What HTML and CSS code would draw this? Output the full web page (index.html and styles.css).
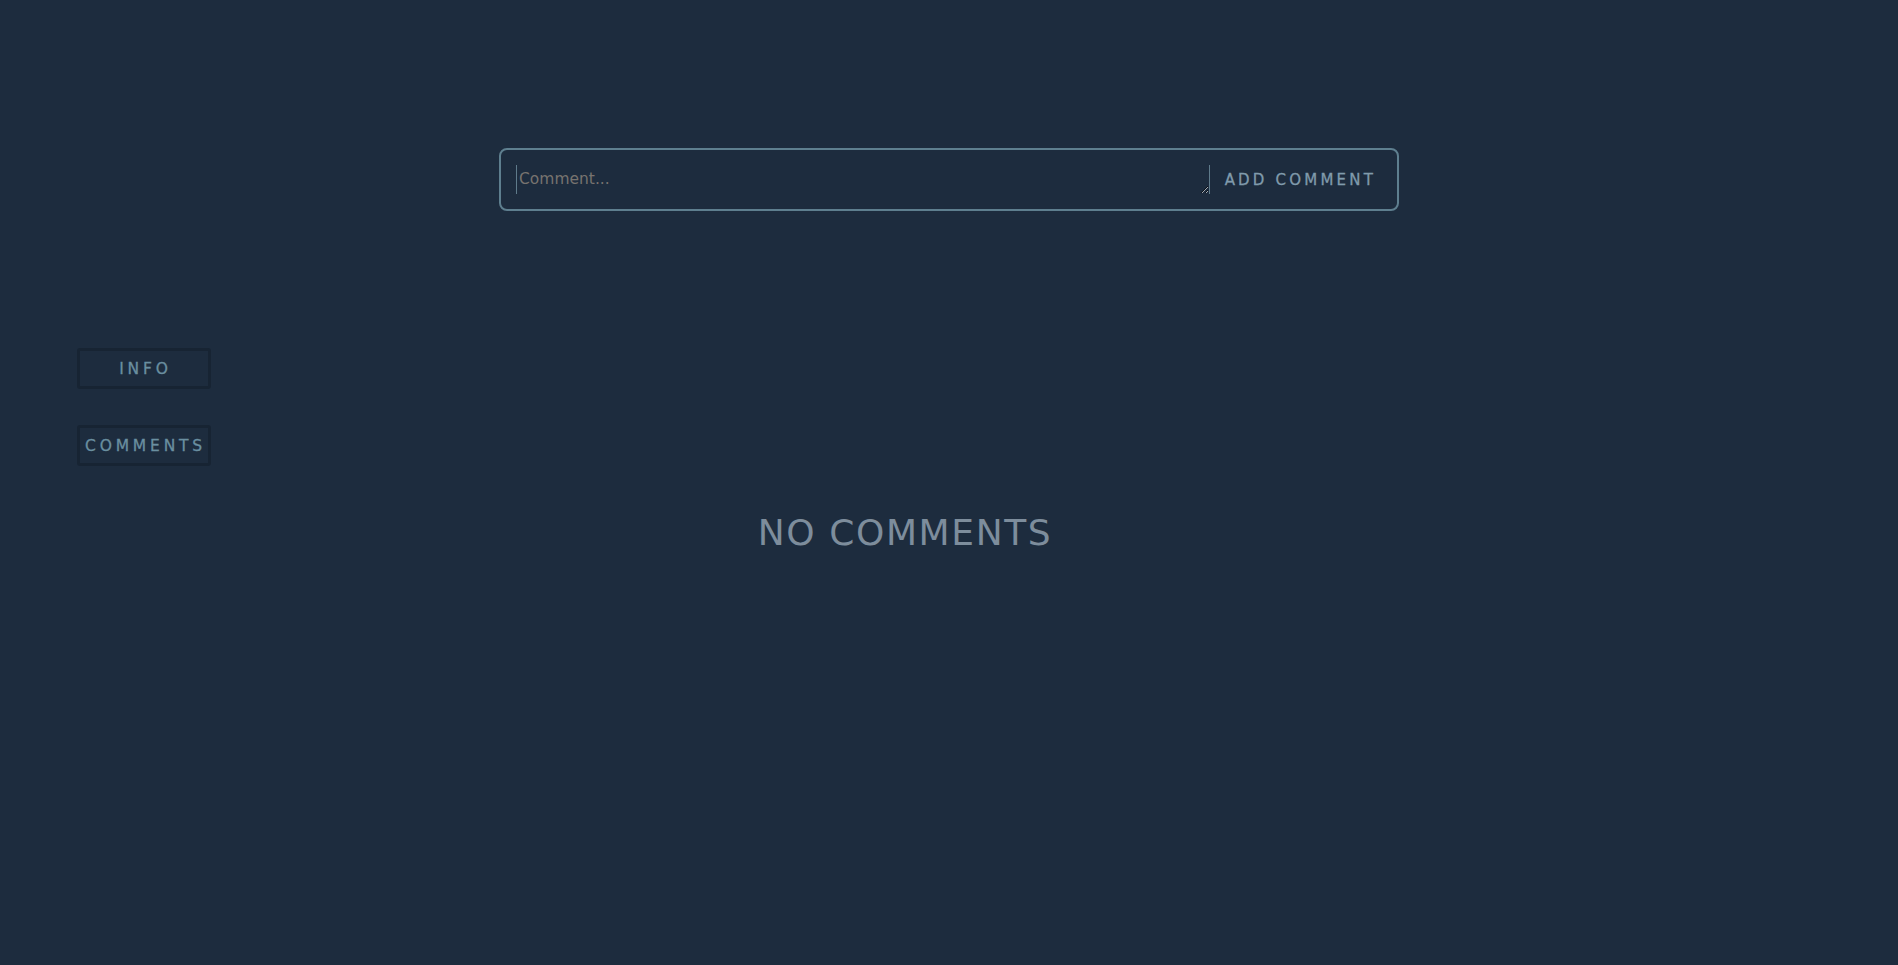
FILE: index.html
```html
<!DOCTYPE html>
<html lang="en">
<head>
<meta charset="utf-8">
<title>Comments</title>
<link rel="stylesheet" href="styles.css">
</head>
<body>
<div class="app">
  <header class="top">
    <form class="comment-form" onsubmit="return false">
      <textarea class="comment-input" placeholder="Comment..."></textarea>
      <button type="submit" class="add-btn">ADD COMMENT</button>
    </form>
  </header>
  <div class="layout">
    <nav class="side">
      <button class="tab">INFO</button>
      <button class="tab">COMMENTS</button>
    </nav>
    <main class="content">
      <h2 class="empty">NO COMMENTS</h2>
    </main>
  </div>
</div>
</body>
</html>
```
FILE: styles.css
```css
html, body {
  margin: 0;
  height: 100%;
  background: #1d2c3e;
}
body {
  font-family: "DejaVu Sans", "Liberation Sans", sans-serif;
}
.app {
  min-height: 100%;
}
.top {
  display: flex;
  justify-content: center;
  padding-top: 148px;
}
.comment-form {
  box-sizing: border-box;
  width: 900px;
  height: 63px;
  display: flex;
  align-items: center;
  border: 2px solid #5e7f8f;
  border-radius: 8px;
  padding: 0 0 0 15px;
  margin: 0;
}
.comment-input {
  flex: 1;
  box-sizing: border-box;
  height: 29px;
  margin: 0;
  padding: 5px 2px 0;
  background: transparent;
  border: none;
  border-left: 1px solid #5f7b8b;
  border-right: 1px solid #5f7b8b;
  color: #a0b0bc;
  font-family: "DejaVu Sans", sans-serif;
  font-size: 15.5px;
  outline: none;
}
.comment-input::placeholder {
  color: #77736f;
}
.add-btn {
  background: transparent;
  border: none;
  color: #809bac;
  font-family: "DejaVu Sans", sans-serif;
  font-size: 15px;
  font-weight: 400;
  letter-spacing: 3.2px;
  padding: 0 21px 0 15px;
  margin: 0;
  -webkit-text-stroke: 0.3px #809bac;
}
.layout {
  display: flex;
  padding-top: 137px;
}
.side {
  display: flex;
  flex-direction: column;
  gap: 36px;
  padding-left: 77px;
  width: 134px;
}
.tab {
  box-sizing: border-box;
  width: 134px;
  height: 41px;
  background: transparent;
  border: 3px solid #172433;
  border-radius: 3px;
  color: #6a8fa0;
  font-family: "DejaVu Sans", sans-serif;
  font-size: 15.5px;
  font-weight: 400;
  letter-spacing: 3.8px;
  padding: 0 0 0 3px;
  -webkit-text-stroke: 0.3px #6a8fa0;
}
.content {
  flex: 1;
  display: flex;
  justify-content: center;
  padding-right: 299px;
}
.empty {
  margin: 164px 0 0;
  color: #7d8d9c;
  font-size: 36px;
  font-weight: 400;
  letter-spacing: 1.6px;
}
```
